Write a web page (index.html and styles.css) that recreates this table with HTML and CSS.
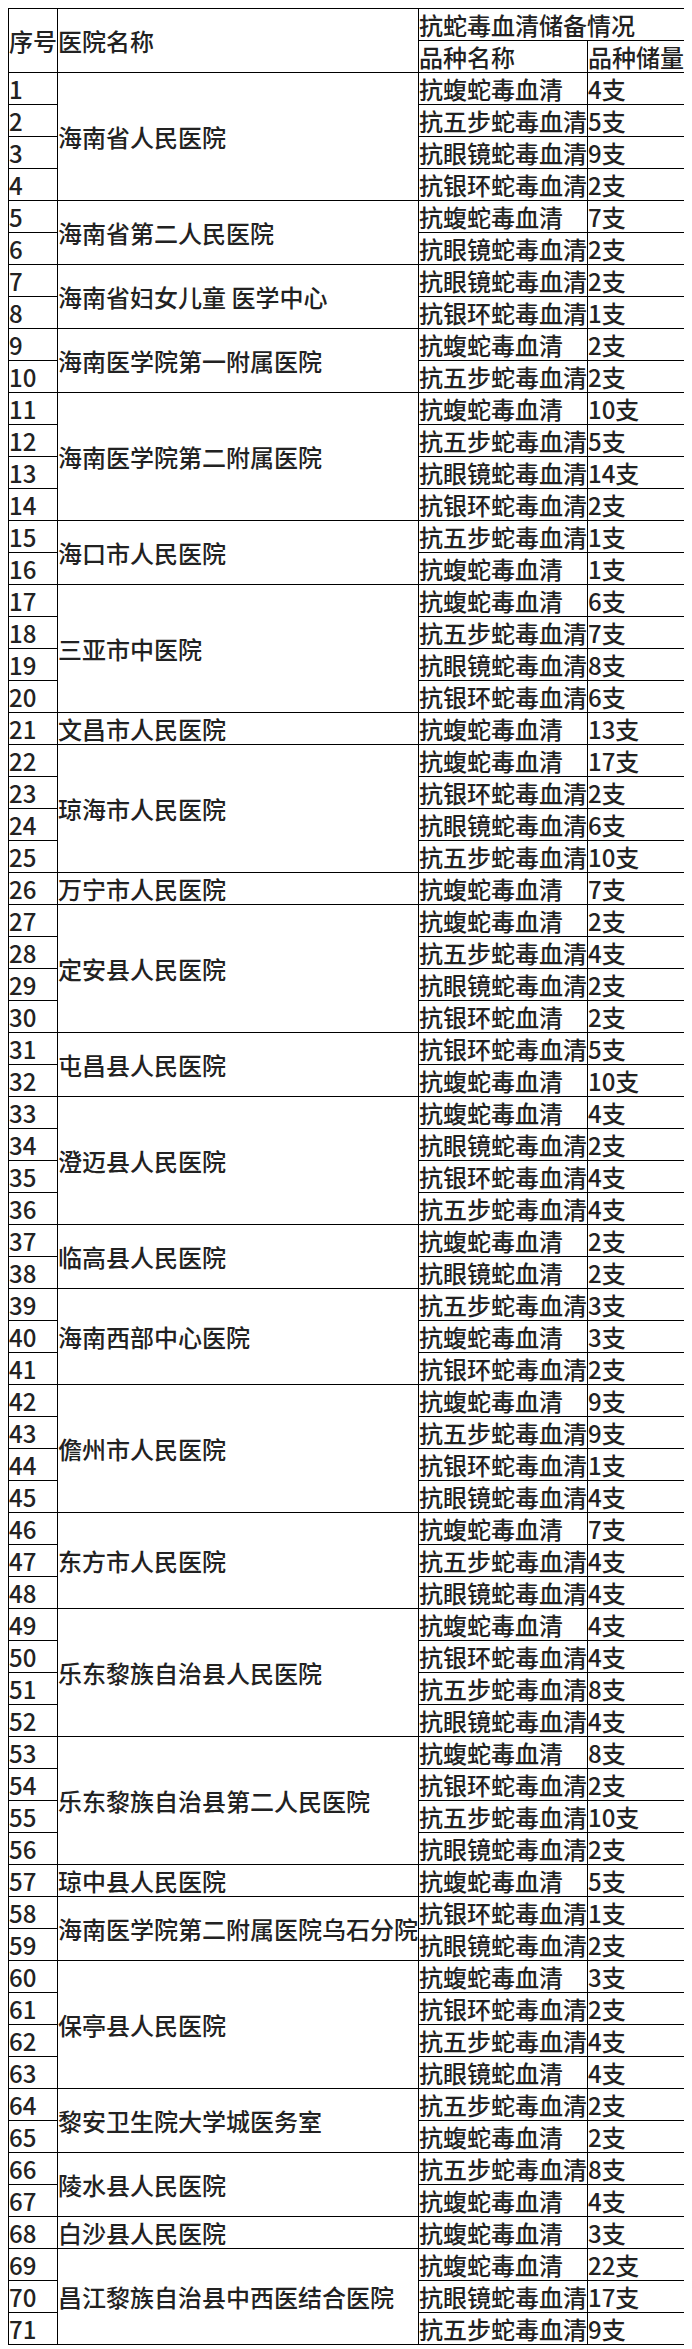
FILE: index.html
```html
<!DOCTYPE html>
<html lang="zh-CN">
<head>
<meta charset="utf-8">
<title>抗蛇毒血清储备情况</title>
<link rel="stylesheet" href="styles.css">
</head>
<body>
<table class="sheet">
<colgroup>
<col class="c-no"><col class="c-name"><col class="c-kind"><col class="c-qty">
</colgroup>
<tr><td rowspan="2">序号</td><td rowspan="2">医院名称</td><td colspan="2">抗蛇毒血清储备情况</td></tr>
<tr><td>品种名称</td><td>品种储量</td></tr>

<tr><td>1</td><td rowspan="4">海南省人民医院</td><td>抗蝮蛇毒血清</td><td>4支</td></tr>
<tr><td>2</td><td>抗五步蛇毒血清</td><td>5支</td></tr>
<tr><td>3</td><td>抗眼镜蛇毒血清</td><td>9支</td></tr>
<tr><td>4</td><td>抗银环蛇毒血清</td><td>2支</td></tr>

<tr><td>5</td><td rowspan="2">海南省第二人民医院</td><td>抗蝮蛇毒血清</td><td>7支</td></tr>
<tr><td>6</td><td>抗眼镜蛇毒血清</td><td>2支</td></tr>

<tr><td>7</td><td rowspan="2">海南省妇女儿童 医学中心</td><td>抗眼镜蛇毒血清</td><td>2支</td></tr>
<tr><td>8</td><td>抗银环蛇毒血清</td><td>1支</td></tr>

<tr><td>9</td><td rowspan="2">海南医学院第一附属医院</td><td>抗蝮蛇毒血清</td><td>2支</td></tr>
<tr><td>10</td><td>抗五步蛇毒血清</td><td>2支</td></tr>

<tr><td>11</td><td rowspan="4">海南医学院第二附属医院</td><td>抗蝮蛇毒血清</td><td>10支</td></tr>
<tr><td>12</td><td>抗五步蛇毒血清</td><td>5支</td></tr>
<tr><td>13</td><td>抗眼镜蛇毒血清</td><td>14支</td></tr>
<tr><td>14</td><td>抗银环蛇毒血清</td><td>2支</td></tr>

<tr><td>15</td><td rowspan="2">海口市人民医院</td><td>抗五步蛇毒血清</td><td>1支</td></tr>
<tr><td>16</td><td>抗蝮蛇毒血清</td><td>1支</td></tr>

<tr><td>17</td><td rowspan="4">三亚市中医院</td><td>抗蝮蛇毒血清</td><td>6支</td></tr>
<tr><td>18</td><td>抗五步蛇毒血清</td><td>7支</td></tr>
<tr><td>19</td><td>抗眼镜蛇毒血清</td><td>8支</td></tr>
<tr><td>20</td><td>抗银环蛇毒血清</td><td>6支</td></tr>

<tr><td>21</td><td>文昌市人民医院</td><td>抗蝮蛇毒血清</td><td>13支</td></tr>

<tr><td>22</td><td rowspan="4">琼海市人民医院</td><td>抗蝮蛇毒血清</td><td>17支</td></tr>
<tr><td>23</td><td>抗银环蛇毒血清</td><td>2支</td></tr>
<tr><td>24</td><td>抗眼镜蛇毒血清</td><td>6支</td></tr>
<tr><td>25</td><td>抗五步蛇毒血清</td><td>10支</td></tr>

<tr><td>26</td><td>万宁市人民医院</td><td>抗蝮蛇毒血清</td><td>7支</td></tr>

<tr><td>27</td><td rowspan="4">定安县人民医院</td><td>抗蝮蛇毒血清</td><td>2支</td></tr>
<tr><td>28</td><td>抗五步蛇毒血清</td><td>4支</td></tr>
<tr><td>29</td><td>抗眼镜蛇毒血清</td><td>2支</td></tr>
<tr><td>30</td><td>抗银环蛇血清</td><td>2支</td></tr>

<tr><td>31</td><td rowspan="2">屯昌县人民医院</td><td>抗银环蛇毒血清</td><td>5支</td></tr>
<tr><td>32</td><td>抗蝮蛇毒血清</td><td>10支</td></tr>

<tr><td>33</td><td rowspan="4">澄迈县人民医院</td><td>抗蝮蛇毒血清</td><td>4支</td></tr>
<tr><td>34</td><td>抗眼镜蛇毒血清</td><td>2支</td></tr>
<tr><td>35</td><td>抗银环蛇毒血清</td><td>4支</td></tr>
<tr><td>36</td><td>抗五步蛇毒血清</td><td>4支</td></tr>

<tr><td>37</td><td rowspan="2">临高县人民医院</td><td>抗蝮蛇毒血清</td><td>2支</td></tr>
<tr><td>38</td><td>抗眼镜蛇血清</td><td>2支</td></tr>

<tr><td>39</td><td rowspan="3">海南西部中心医院</td><td>抗五步蛇毒血清</td><td>3支</td></tr>
<tr><td>40</td><td>抗蝮蛇毒血清</td><td>3支</td></tr>
<tr><td>41</td><td>抗银环蛇毒血清</td><td>2支</td></tr>

<tr><td>42</td><td rowspan="4">儋州市人民医院</td><td>抗蝮蛇毒血清</td><td>9支</td></tr>
<tr><td>43</td><td>抗五步蛇毒血清</td><td>9支</td></tr>
<tr><td>44</td><td>抗银环蛇毒血清</td><td>1支</td></tr>
<tr><td>45</td><td>抗眼镜蛇毒血清</td><td>4支</td></tr>

<tr><td>46</td><td rowspan="3">东方市人民医院</td><td>抗蝮蛇毒血清</td><td>7支</td></tr>
<tr><td>47</td><td>抗五步蛇毒血清</td><td>4支</td></tr>
<tr><td>48</td><td>抗眼镜蛇毒血清</td><td>4支</td></tr>

<tr><td>49</td><td rowspan="4">乐东黎族自治县人民医院</td><td>抗蝮蛇毒血清</td><td>4支</td></tr>
<tr><td>50</td><td>抗银环蛇毒血清</td><td>4支</td></tr>
<tr><td>51</td><td>抗五步蛇毒血清</td><td>8支</td></tr>
<tr><td>52</td><td>抗眼镜蛇毒血清</td><td>4支</td></tr>

<tr><td>53</td><td rowspan="4">乐东黎族自治县第二人民医院</td><td>抗蝮蛇毒血清</td><td>8支</td></tr>
<tr><td>54</td><td>抗银环蛇毒血清</td><td>2支</td></tr>
<tr><td>55</td><td>抗五步蛇毒血清</td><td>10支</td></tr>
<tr><td>56</td><td>抗眼镜蛇毒血清</td><td>2支</td></tr>

<tr><td>57</td><td>琼中县人民医院</td><td>抗蝮蛇毒血清</td><td>5支</td></tr>

<tr><td>58</td><td rowspan="2">海南医学院第二附属医院乌石分院</td><td>抗银环蛇毒血清</td><td>1支</td></tr>
<tr><td>59</td><td>抗眼镜蛇毒血清</td><td>2支</td></tr>

<tr><td>60</td><td rowspan="4">保亭县人民医院</td><td>抗蝮蛇毒血清</td><td>3支</td></tr>
<tr><td>61</td><td>抗银环蛇毒血清</td><td>2支</td></tr>
<tr><td>62</td><td>抗五步蛇毒血清</td><td>4支</td></tr>
<tr><td>63</td><td>抗眼镜蛇血清</td><td>4支</td></tr>

<tr><td>64</td><td rowspan="2">黎安卫生院大学城医务室</td><td>抗五步蛇毒血清</td><td>2支</td></tr>
<tr><td>65</td><td>抗蝮蛇毒血清</td><td>2支</td></tr>

<tr><td>66</td><td rowspan="2">陵水县人民医院</td><td>抗五步蛇毒血清</td><td>8支</td></tr>
<tr><td>67</td><td>抗蝮蛇毒血清</td><td>4支</td></tr>

<tr><td>68</td><td>白沙县人民医院</td><td>抗蝮蛇毒血清</td><td>3支</td></tr>

<tr><td>69</td><td rowspan="3">昌江黎族自治县中西医结合医院</td><td>抗蝮蛇毒血清</td><td>22支</td></tr>
<tr><td>70</td><td>抗眼镜蛇毒血清</td><td>17支</td></tr>
<tr><td>71</td><td>抗五步蛇毒血清</td><td>9支</td></tr>
</table>
</body>
</html>
```
FILE: styles.css
```css
html, body {
  background: #ffffff;
}
body {
  margin: 8px;
  font-family: "Noto Sans CJK SC", "Noto Sans", sans-serif;
  color: #222222;
}
.sheet {
  border-collapse: collapse;
  table-layout: fixed;
  width: 677px;
  font-size: 24px;
  font-weight: 500;
}
.c-no { width: 49px; }
.c-name { width: 361px; }
.c-kind { width: 169px; }
.c-qty { width: 98px; }
.sheet td {
  border: 1px solid #000000;
  padding: 0;
  height: 31px;
  line-height: 31px;
  white-space: nowrap;
  vertical-align: middle;
  text-align: left;
  overflow: visible;
}
```
